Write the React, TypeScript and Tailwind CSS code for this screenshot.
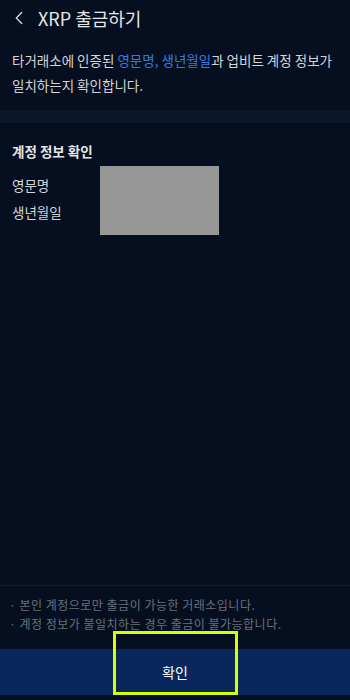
import { ChevronLeft } from 'lucide-react'

const font = { fontFamily: '"Noto Sans CJK KR", "Noto Sans", sans-serif' }

export default function App() {
  return (
    <div className="w-[350px] h-[700px] bg-[#060f1f] flex flex-col overflow-hidden" style={font}>
      {/* Header */}
      <div className="h-[36px] flex items-center pl-[8px] gap-[8px]">
        <ChevronLeft className="w-[22px] h-[22px] text-[#d8dbe0]" strokeWidth={1.4} />
        <span className="text-[18px] text-[#e3e5e8]">XRP 출금하기</span>
      </div>

      {/* Description */}
      <div className="px-[12px] pt-[12px] pb-[12px] text-[13.5px] leading-[25px] text-[#d2d5da]">
        타거래소에 인증된 <span className="text-[#2f7be0]">영문명, 생년월일</span>과 업비트 계정 정보가
        <br />
        일치하는지 확인합니다.
      </div>

      <div className="h-[13px] bg-[#0c1729]" />

      {/* Account info */}
      <div className="px-[12px] pt-[18px]">
        <div className="text-[13.5px] font-bold text-[#e3e5e8]">계정 정보 확인</div>
        <div className="flex mt-[5px]">
          <div className="w-[88px] pt-[8px] flex flex-col gap-[5px] text-[13.5px] text-[#d2d5da] leading-[22px]">
            <span>영문명</span>
            <span>생년월일</span>
          </div>
          <div className="w-[119px] h-[69px] bg-[#969696]" />
        </div>
      </div>

      <div className="flex-1" />

      {/* Notes */}
      <div className="border-t border-[#111c2f] px-[9px] pt-[9px] pb-[16px] text-[12px] tracking-[0.5px] leading-[19px] text-[#6a717d]">
        <div>· 본인 계정으로만 출금이 가능한 거래소입니다.</div>
        <div>· 계정 정보가 불일치하는 경우 출금이 불가능합니다.</div>
      </div>

      {/* Button */}
      <div className="relative">
        <button className="w-full h-[46px] bg-[#0a275c] text-[14px] text-white">확인</button>
        <div className="absolute left-[113px] top-[-18px] w-[125px] h-[64px] border-[3px] border-[#d6ff00] pointer-events-none" />
      </div>
      <div className="h-[5px]" />
    </div>
  )
}
